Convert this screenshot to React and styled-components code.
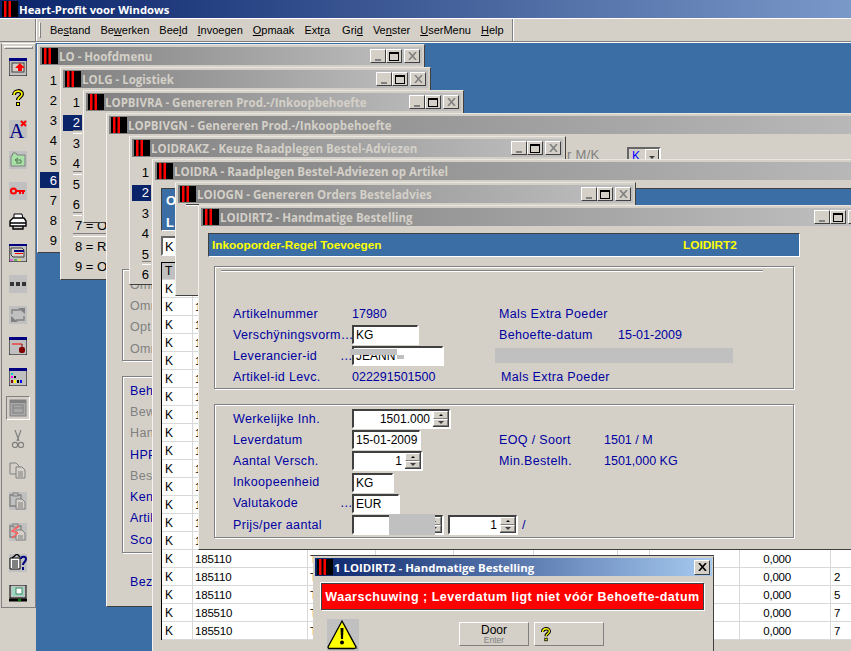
import styled, { createGlobalStyle } from "styled-components";

const GlobalStyle = createGlobalStyle`
  html, body {
    margin: 0;
    padding: 0;
    background: #d4d0c8;
  }
  * {
    box-sizing: border-box;
  }
`;

const MENUS = [
  ["Be", "s", "tand"],
  ["Be", "w", "erken"],
  ["Bee", "l", "d"],
  ["", "I", "nvoegen"],
  ["", "O", "pmaak"],
  ["Ext", "r", "a"],
  ["Gri", "d", ""],
  ["Ve", "n", "ster"],
  ["", "U", "serMenu"],
  ["", "H", "elp"],
];

function QuestionMark() {
  return (
    <svg width="14" height="18" viewBox="0 0 14 18">
      <path d="M3 6 C3 1 11 1 11 5 C11 8 7 8 7 11" fill="none" stroke="#000" strokeWidth="4" />
      <rect x="5" y="13" width="4" height="4" fill="#000" />
      <path d="M3 6 C3 1 11 1 11 5 C11 8 7 8 7 11" fill="none" stroke="#ff0" strokeWidth="1.6" />
      <rect x="6" y="14" width="2" height="2" fill="#ff0" />
    </svg>
  );
}

const G = "#808080";

const TOOL_ICONS = [
  {
    shade: false,
    art: (
      <>
        <rect x="0" y="0" width="18" height="18" fill="#c0c0c0" stroke="#000" />
        <rect x="0" y="0" width="18" height="3" fill="#000080" />
        <rect x="3" y="5" width="12" height="9" fill="#d4d0c8" stroke="#404040" />
        <path d="M11 5 L16 10 H13 V13 H9 V10 H6 Z" fill="#f00" />
      </>
    ),
  },
  { shade: false, help: true },
  {
    shade: true,
    art: (
      <>
        <text x="0" y="18" fontFamily="Liberation Serif" fontSize="21" fill="#000080">A</text>
        <path d="M12 1 L17 6 M17 1 L12 6" stroke="#f00" strokeWidth="2" />
      </>
    ),
  },
  {
    shade: true,
    art: (
      <>
        <path d="M2 5 V15 H16 V4 H8 L7 2 H4 L3 5 Z" fill="#a8e0a8" stroke={G} />
        <path d="M6 9 H12 M9 7 L6 9 L9 11 M12 9 V12 H7" fill="none" stroke="#507850" />
      </>
    ),
  },
  {
    shade: true,
    art: (
      <>
        <circle cx="4.5" cy="9" r="2.6" fill="none" stroke="#f00" strokeWidth="2" />
        <path d="M7 9 H16 M11 9 V12 M14 9 V12" fill="none" stroke="#f00" strokeWidth="2" />
      </>
    ),
  },
  {
    shade: false,
    art: (
      <>
        <path d="M5 1 H13 L14 6 H5 Z" fill="#fff" stroke="#000" />
        <path d="M1 8 L4 5 H15 L17 8 V13 H1 Z" fill="#fff" stroke="#000" strokeWidth="1.4" />
        <path d="M1 10 H17 M4 13 V16 H14 V13" fill="none" stroke="#000" strokeWidth="1.4" />
      </>
    ),
  },
  {
    shade: false,
    art: (
      <>
        <rect x="0" y="0" width="18" height="18" fill="#c0c0c0" stroke="#000" />
        <rect x="0" y="0" width="18" height="2" fill="#000080" />
        <path d="M2 4 H13 L15 6 V13 H4 L2 11 Z" fill="#d4d0c8" stroke="#404040" />
        <rect x="5" y="6" width="10" height="2" fill="#000080" />
        <rect x="6" y="9" width="8" height="1" fill="#f00" />
        <path d="M1 16 H4" stroke="#f0f" />
        <path d="M5 16 H8" stroke="#0a0" />
        <path d="M9 16 H12" stroke="#ff0" />
      </>
    ),
  },
  {
    shade: true,
    art: (
      <>
        <rect x="1" y="7" width="4" height="4" fill="#333" />
        <rect x="7" y="7" width="4" height="4" fill="#333" />
        <rect x="13" y="7" width="4" height="4" fill="#333" />
      </>
    ),
  },
  {
    shade: true,
    art: (
      <>
        <path d="M3 8 V4 H11 M15 10 V14 H7" fill="none" stroke={G} strokeWidth="1.4" />
        <path d="M9 2 H16 V8 Z M9 16 H2 V10 Z" fill={G} />
      </>
    ),
  },
  {
    shade: false,
    art: (
      <>
        <rect x="0" y="0" width="18" height="18" fill="#c0c0c0" stroke="#000" />
        <rect x="0" y="0" width="18" height="3" fill="#000080" />
        <path d="M3 7 H13" stroke="#f00" />
        <path d="M13 7 V10" stroke="#800000" />
        <rect x="10" y="10" width="6" height="6" rx="2" fill="#800000" />
      </>
    ),
  },
  {
    shade: false,
    art: (
      <>
        <rect x="0" y="0" width="18" height="18" fill="#c0c0c0" stroke="#000" />
        <rect x="0" y="0" width="18" height="3" fill="#000080" />
        <rect x="2" y="5" width="2" height="2" fill="#0cc" />
        <rect x="2" y="8" width="2" height="2" fill="#f0f" />
        <rect x="2" y="12" width="2" height="3" fill="#800" />
        <rect x="5" y="8" width="2" height="2" fill="#000" />
        <rect x="5" y="12" width="2" height="3" fill="#ff0" />
        <rect x="8" y="12" width="2" height="3" fill="#000" />
        <rect x="11" y="12" width="2" height="3" fill="#00f" />
      </>
    ),
  },
  {
    selected: true,
    art: (
      <>
        <rect x="1" y="1" width="16" height="16" fill="#a8a8a8" stroke={G} />
        <rect x="1" y="1" width="16" height="3" fill={G} />
        <rect x="4" y="6" width="10" height="8" fill="none" stroke={G} />
        <path d="M4 9 H14" stroke={G} />
      </>
    ),
  },
  {
    shade: false,
    art: (
      <>
        <path d="M6 0 L10 11 M12 0 L8 11" stroke={G} strokeWidth="1.2" />
        <circle cx="6" cy="15" r="2.6" fill="none" stroke={G} strokeWidth="1.2" />
        <circle cx="12" cy="15" r="2.6" fill="none" stroke={G} strokeWidth="1.2" />
      </>
    ),
  },
  {
    shade: false,
    art: (
      <>
        <path d="M1 2 H7 L10 5 V13 H1 Z" fill="#d4d0c8" stroke={G} />
        <path d="M7 6 H13 L16 9 V17 H7 Z" fill="#d4d0c8" stroke={G} />
        <path d="M9 11 H14 M9 13 H14 M9 15 H14" stroke={G} />
      </>
    ),
  },
  {
    shade: true,
    art: (
      <>
        <path d="M1 3 H12 V14 H1 Z" fill="#c0c0c0" stroke={G} strokeWidth="1.3" />
        <rect x="4" y="1" width="5" height="3" fill="#c0c0c0" stroke={G} />
        <path d="M7 7 H13 L16 10 V17 H7 Z" fill="#d4d0c8" stroke={G} />
        <path d="M9 11 H14 M9 13 H14 M9 15 H14" stroke={G} />
      </>
    ),
  },
  {
    shade: true,
    art: (
      <>
        <path d="M1 3 H12 V14 H1 Z" fill="#c0c0c0" stroke={G} strokeWidth="1.3" />
        <rect x="4" y="1" width="5" height="3" fill="#c0c0c0" stroke={G} />
        <path d="M7 7 H13 L16 10 V17 H7 Z" fill="#d4d0c8" stroke={G} />
        <path d="M9 13 H14 M9 15 H14" stroke={G} />
        <path d="M10 3 L3 8 L9 10 M3 15 L9 10" fill="none" stroke="#ff6060" strokeWidth="1.6" />
      </>
    ),
  },
  {
    shade: true,
    art: (
      <>
        <path d="M1 4 H11 V15 H1 Z" fill="#fff" stroke="#000" />
        <path d="M3 7 H9 M3 9 H9 M3 11 H9 M3 13 H9" stroke="#000" />
        <path d="M3 4 L8 0 L11 3" fill="none" stroke="#000" strokeWidth="1.4" />
        <path d="M12 5 C12 2 17 2 17 5 C17 8 14 8 14 11 M14 13 V16" fill="none" stroke="#000080" strokeWidth="2" />
      </>
    ),
  },
  {
    shade: false,
    art: (
      <>
        <rect x="1" y="0" width="16" height="13" fill="#c0c0c0" stroke="#000" />
        <rect x="3" y="2" width="12" height="9" fill="#9fd8c0" />
        <rect x="7" y="3" width="6" height="6" fill="#fff" stroke="#408060" />
        <path d="M0 15 H18" stroke="#000" strokeWidth="3" />
        <path d="M9 15 H12" stroke="#0f0" />
      </>
    ),
  },
];

const COLUMNS = [31, 115, 68, 78, 80, 84, 32, 90, 91, 60];

const FIRST_ROW = ["K", "185110", "TH", "10.007", "14 14 14", "01-01-2009", "", "10.007", "0,000", ""];

const HIDDEN_ROW = ["K", "1"];

const LOWER_ROWS = [
  ["K", "185110", "T", "", "", "", "", "", "0,000", ""],
  ["K", "185110", "T", "", "", "", "", "", "0,000", "2"],
  ["K", "185110", "T", "", "", "", "", "", "0,000", "5"],
  ["K", "185510", "T", "", "", "", "", "", "0,000", "7"],
  ["K", "185510", "T", "", "", "", "", "", "0,000", "7"],
];

function Logo() {
  return (
    <LogoBox>
      <svg width="16" height="16" viewBox="0 0 16 16">
        <rect width="16" height="16" fill="#000" />
        <rect x="2" y="0" width="2.500" height="16" fill="#f00" />
        <rect x="6.500" y="0" width="2.500" height="16" fill="#f00" />
      </svg>
    </LogoBox>
  );
}

function CloseGlyph({ color }) {
  return (
    <svg width="9" height="8" viewBox="0 0 9 8">
      <path d="M1 0 L8 8 M8 0 L1 8" stroke={color} strokeWidth="1.6" />
    </svg>
  );
}

function Window({ left, top, right, bottom, title, children }) {
  return (
    <Frame $left={left} $top={top} $right={right} $bottom={bottom}>
      <TitleBar>
        <Logo />
        <TitleText>{title}</TitleText>
        <WinButtons>
          <WinButton>
            <MinGlyph />
          </WinButton>
          <WinButton>
            <MaxGlyph />
          </WinButton>
          <CloseButton>
            <CloseGlyph color="#808080" />
          </CloseButton>
        </WinButtons>
      </TitleBar>
      {children}
    </Frame>
  );
}

function Spinner({ width, value, arrows = 16 }) {
  return (
    <Field $w={width} $h={19} $right>
      <SpinValue>{value}</SpinValue>
      <SpinBox $w={arrows}>
        <SpinPart>
          <ArrowUp />
        </SpinPart>
        <SpinPart>
          <ArrowDown />
        </SpinPart>
      </SpinBox>
    </Field>
  );
}

function NumberList({ offset, rows, pitch }) {
  return (
    <NumberColumn $offset={offset}>
      {rows.map((r) => (
        <NumberRow key={r.n} $active={r.active} $line={r.line} $pitch={pitch} $wide={r.wide}>
          {r.n}
        </NumberRow>
      ))}
    </NumberColumn>
  );
}

export default function App() {
  return (
    <Screen>
      <GlobalStyle />
      <AppTitle>
        <Logo />
        <AppTitleText>Heart-Profit voor Windows</AppTitleText>
      </AppTitle>
      <MenuBar>
        <MenuStub />
        <MenuBand>
          <MenuHandle />
          {MENUS.map(([a, b, c]) => (
            <MenuItem key={a + b + c} $wide={b === "r"}>
              {a}
              <u>{b}</u>
              {c}
            </MenuItem>
          ))}
        </MenuBand>
      </MenuBar>
      <Body>
        <SideColumn>
          <ToolBar>
            <ToolHandle />
            {TOOL_ICONS.map((t, i) => (
              <ToolSlot key={i}>
                <ToolIcon $shade={t.shade} $selected={t.selected}>
                  {t.help ? (
                    <QuestionMark />
                  ) : (
                    <svg width="18" height="18" viewBox="0 0 18 18">
                      {t.art}
                    </svg>
                  )}
                </ToolIcon>
              </ToolSlot>
            ))}
          </ToolBar>
        </SideColumn>
        <Desktop>
          <Window left={37} top={44} right={425} bottom={253} title="LO - Hoofdmenu">
            <NumberList
              offset={7}
              pitch={20}
              rows={[
                { n: 1 },
                { n: 2 },
                { n: 3 },
                { n: 4 },
                { n: 5 },
                { n: 6, active: true },
                { n: 7 },
                { n: 8 },
                { n: 9 },
              ]}
            />
          </Window>
          <Window left={60} top={67} right={431} bottom={280} title="LOLG - Logistiek">
            <NumberList
              offset={6}
              pitch={20.6}
              rows={[
                { n: 1 },
                { n: 2, active: true, line: true },
                { n: 3 },
                { n: 4, line: true },
                { n: 5 },
                { n: 6, line: true },
                { n: "7 = O", wide: true, line: true },
                { n: "8 = R", wide: true },
                { n: "9 = O", wide: true },
              ]}
            />
          </Window>
          <Window left={83} top={90} right={464} bottom={223} title="LOPBIVRA - Genereren Prod.-/Inkoopbehoefte" />
          <Window left={106} top={113} right={960} bottom={607} title="LOPBIVGN - Genereren Prod.-/Inkoopbehoefte">
            <TopSelect>
              <GrayLabel>r M/K</GrayLabel>
              <Combo>
                <ComboValue>K</ComboValue>
                <ComboButton>
                  <ArrowDown />
                </ComboButton>
              </Combo>
            </TopSelect>
            <SideGroup $h={92} $mt={135} $pad={4}>
              <SideText $gray>Omr</SideText>
              <SideText $gray>Omr</SideText>
              <SideText $gray>Opt</SideText>
              <SideText $gray>Omr</SideText>
            </SideGroup>
            <SideGroup $h={177} $mt={15} $pad={3}>
              <SideText>Beh</SideText>
              <SideText $gray>Bew</SideText>
              <SideText $gray>Han</SideText>
              <SideText>HPP</SideText>
              <SideText $gray>Bes</SideText>
              <SideText>Ken</SideText>
              <SideText>Artik</SideText>
              <SideText>Sco</SideText>
            </SideGroup>
            <BottomText>Bez</BottomText>
          </Window>
          <Window left={129} top={136} right={566} bottom={285} title="LOIDRAKZ - Keuze Raadplegen Bestel-Adviezen">
            <NumberList
              offset={7}
              pitch={20.5}
              rows={[
                { n: 1 },
                { n: 2, active: true },
                { n: 3 },
                { n: 4 },
                { n: 5, line: true },
                { n: 6 },
              ]}
            />
          </Window>
          <Window left={152} top={159} right={960} bottom={700} title="LOIDRA - Raadplegen Bestel-Adviezen op Artikel">
            <OrderHead>
              <OrderLetter>O</OrderLetter>
              <OrderLetter>L</OrderLetter>
            </OrderHead>
            <FilterInput>K</FilterInput>
            <Grid>
              <GridRow $head>
                {COLUMNS.map((w, i) => (
                  <GridCell key={i} $w={w} $head={i === 0} $lead={i === 0}>
                    {i === 0 ? "T" : ""}
                  </GridCell>
                ))}
              </GridRow>
              {Array.from({ length: 14 }).map((_, r) => (
                <GridRow key={r}>
                  {COLUMNS.map((w, i) => (
                    <GridCell key={i} $w={w} $lead={i === 0}>
                      {HIDDEN_ROW[i] || ""}
                    </GridCell>
                  ))}
                </GridRow>
              ))}
              {[FIRST_ROW, ...LOWER_ROWS].map((row, r) => (
                <GridRow key={r}>
                  {COLUMNS.map((w, i) => (
                    <GridCell key={i} $w={w} $lead={i === 0} $amount={i === 8} $last={i === 9}>
                      {row[i]}
                    </GridCell>
                  ))}
                </GridRow>
              ))}
            </Grid>
          </Window>
          <Window left={175} top={182} right={636} bottom={296} title="LOIOGN - Genereren Orders Besteladvies">
            <TinyRule />
          </Window>
          <Window left={198} top={205} right={869} bottom={550} title="LOIDIRT2 - Handmatige Bestelling">
            <FormHead>
              <FormTitle>Inkooporder-Regel Toevoegen</FormTitle>
              <FormCode>LOIDIRT2</FormCode>
            </FormHead>
            <Group $h={123} $mt={9}>
              <GroupRule />
              <FormRow>
                <Label>Artikelnummer</Label>
                <Value>17980</Value>
                <Label>Mals Extra Poeder</Label>
              </FormRow>
              <FormRow>
                <Label>Verschÿningsvorm…</Label>
                <Field $w={66} $h={19}>KG</Field>
                <Label>Behoefte-datum</Label>
                <Value>15-01-2009</Value>
              </FormRow>
              <FormRow>
                <Label>Leverancier-id<Dots>…</Dots></Label>
                <BlurField>
                  <Field $w={91} $h={19}>JEANN</Field>
                  <BlurTop />
                  <BlurBottom />
                </BlurField>
                <GrayBar />
              </FormRow>
              <FormRow>
                <Label>Artikel-id Levc.</Label>
                <Value>022291501500</Value>
                <Label $nudge>Mals Extra Poeder</Label>
              </FormRow>
            </Group>
            <Group $h={134} $mt={15}>
              <Rows2>
                <FormRow $third={105}>
                  <Label>Werkelijke Inh.</Label>
                  <Spinner width={98} value="1501.000" />
                </FormRow>
                <FormRow $third={105}>
                  <Label>Leverdatum</Label>
                  <Field $w={68} $h={19}>15-01-2009</Field>
                  <Label>EOQ / Soort</Label>
                  <Value>1501 / M</Value>
                </FormRow>
                <FormRow $third={105}>
                  <Label>Aantal Versch.</Label>
                  <Spinner width={70} value="1" />
                  <Label>Min.Bestelh.</Label>
                  <Value>1501,000 KG</Value>
                </FormRow>
                <FormRow $third={105}>
                  <Label>Inkoopeenheid</Label>
                  <Field $w={41} $h={19}>KG</Field>
                </FormRow>
                <FormRow $third={105}>
                  <Label>Valutakode<Dots>…</Dots></Label>
                  <Field $w={47} $h={19}>EUR</Field>
                </FormRow>
                <FormRow $third={105}>
                  <Label>Prijs/per aantal</Label>
                  <PriceCell>
                    <BlurField>
                      <Spinner width={91} value="" />
                      <PriceBlur />
                    </BlurField>
                    <Spinner width={69} value="1" />
                    <Value>/</Value>
                  </PriceCell>
                </FormRow>
              </Rows2>
            </Group>
          </Window>
          <Dialog>
            <DialogTitle>
              <Logo />
              <DialogTitleText>1 LOIDIRT2 - Handmatige Bestelling</DialogTitleText>
              <DialogClose>
                <CloseGlyph color="#000" />
              </DialogClose>
            </DialogTitle>
            <WarningBox>Waarschuwing ; Leverdatum ligt niet vóór Behoefte-datum</WarningBox>
            <DialogActions>
              <WarningIcon>
                <svg width="32" height="32" viewBox="0 0 32 32">
                  <rect width="32" height="32" fill="#c0c0c0" />
                  <path d="M17 4 L31 30 H3 Z" fill="#808080" />
                  <path d="M15 2 L29 28 Q29 29.500 27 29.500 H3 Q1 29.500 1 28 Z" fill="#ff0" stroke="#000" strokeWidth="1.300" />
                  <path d="M13.500 9 H16.500 L16 20 H14 Z" fill="#000" />
                  <circle cx="15" cy="23.500" r="2" fill="#000" />
                </svg>
              </WarningIcon>
              <ActionButton>
                <DoorText>Door</DoorText>
                <EnterText>Enter</EnterText>
              </ActionButton>
              <HelpButton>
                <QuestionMark />
              </HelpButton>
            </DialogActions>
          </Dialog>
        </Desktop>
      </Body>
    </Screen>
  );
}

const Screen = styled.div`
  width: 851px;
  height: 651px;
  overflow: hidden;
  display: flex;
  flex-direction: column;
  background: #d4d0c8;
  font-family: "Liberation Sans", Arial, sans-serif;
  font-size: 12px;
  color: #000;
`;

const LogoBox = styled.div`
  display: flex;
  flex: none;
  svg {
    display: block;
  }
`;

const AppTitle = styled.div`
  height: 18px;
  flex: none;
  display: flex;
  align-items: center;
  padding-left: 2px;
  background: linear-gradient(90deg, #0a246a, #7a98c8);
`;

const AppTitleText = styled.span`
  margin-left: 1px;
  color: #fff;
  font-family: "Open Sans", sans-serif;
  font-weight: 700;
  font-size: 11.300px;
`;

const MenuBar = styled.div`
  height: 24px;
  flex: none;
  display: flex;
  border-top: 1px solid #fff;
  border-bottom: 1px solid #808080;
`;

const MenuStub = styled.div`
  width: 36px;
  border-right: 1px solid #808080;
`;

const MenuBand = styled.div`
  width: 477px;
  display: flex;
  align-items: center;
  border-left: 1px solid #fff;
  border-right: 1px solid #808080;
  box-shadow: 1px 0 0 #fff;
  padding-left: 2px;
`;

const MenuHandle = styled.div`
  width: 3px;
  height: 16px;
  margin-right: 9px;
  border: 1px solid;
  border-color: #fff #808080 #808080 #fff;
`;

const MenuItem = styled.span`
  margin-right: ${(p) => (p.$wide ? "12px" : "10px")};
  font-size: 11px;
  white-space: nowrap;
`;

const Body = styled.div`
  flex: 1;
  display: flex;
  min-height: 0;
`;

const SideColumn = styled.div`
  width: 36px;
  flex: none;
`;

const ToolBar = styled.div`
  height: 565px;
  width: 35px;
  margin-top: 1px;
  margin-left: 1px;
  display: flex;
  flex-direction: column;
  padding-top: 2px;
  border: 1px solid;
  border-color: #fff #808080 #808080 #808080;
`;

const ToolHandle = styled.div`
  height: 3px;
  flex: none;
  margin: 0 2px 2px;
  border: 1px solid;
  border-color: #fff #808080 #808080 #fff;
`;

const ToolSlot = styled.div`
  height: 31px;
  flex: none;
  display: flex;
  align-items: center;
  justify-content: center;
  padding-right: 2px;
`;

const ToolIcon = styled.div`
  display: flex;
  align-items: center;
  justify-content: center;
  width: ${(p) => (p.$selected ? "24px" : "18px")};
  height: ${(p) => (p.$selected ? "24px" : "18px")};
  background: ${(p) => (p.$shade ? "#c0c0c0" : "transparent")};
  border: ${(p) => (p.$selected ? "1px solid #fff" : "none")};
  border-top-color: #808080;
  border-left-color: #808080;
`;

const Desktop = styled.div`
  flex: 1;
  position: relative;
  overflow: hidden;
  background: #3a6ea5;
  border-top: 1px solid #fff;
`;

const Frame = styled.div`
  position: absolute;
  left: ${(p) => p.$left - 36}px;
  top: ${(p) => p.$top - 43}px;
  width: ${(p) => p.$right - p.$left}px;
  height: ${(p) => p.$bottom - p.$top}px;
  padding: 3px;
  background: #d4d0c8;
  border: 1px solid;
  border-color: #e8e6e0 #404040 #404040 #f4f3ef;
  overflow: hidden;
`;

const TitleBar = styled.div`
  height: 18px;
  margin: -1px -1px 0;
  padding-left: 2px;
  display: flex;
  align-items: center;
  background: linear-gradient(90deg, #808080, #c0c0c0);
`;

const TitleText = styled.span`
  margin-left: 1px;
  color: #d4d0c8;
  font-family: "Open Sans", sans-serif;
  font-weight: 700;
  font-size: 11.500px;
  white-space: nowrap;
`;

const WinButtons = styled.div`
  margin-left: auto;
  margin-right: 2px;
  display: flex;
  flex: none;
`;

const WinButton = styled.div`
  width: 16px;
  height: 14px;
  position: relative;
  display: flex;
  align-items: center;
  justify-content: center;
  background: #d4d0c8;
  border: 1px solid;
  border-color: #fff #404040 #404040 #fff;
`;

const CloseButton = styled(WinButton)`
  margin-left: 2px;
`;

const MinGlyph = styled.div`
  width: 6px;
  height: 2px;
  background: #808080;
  margin-top: 7px;
  margin-right: 1px;
`;

const MaxGlyph = styled.div`
  width: 10px;
  height: 9px;
  border: 1px solid #000;
  border-top-width: 2px;
`;

const NumberColumn = styled.div`
  width: 60px;
  margin-top: ${(p) => p.$offset}px;
  margin-left: -1px;
`;

const NumberRow = styled.div`
  height: 16px;
  margin-bottom: ${(p) => p.$pitch - 16}px;
  width: ${(p) => (p.$wide ? "60px" : "19px")};
  position: relative;
  display: flex;
  justify-content: ${(p) => (p.$wide ? "flex-start" : "flex-end")};
  align-items: center;
  padding: ${(p) => (p.$wide ? "0 0 0 12px" : "0 2px 0 0")};
  white-space: nowrap;
  color: ${(p) => (p.$active ? "#fff" : "#000")};
  background: ${(p) => (p.$active ? "#0a246a" : "transparent")};
  font-size: 13px;
  &::after {
    content: "";
    display: ${(p) => (p.$line ? "block" : "none")};
    position: absolute;
    left: 10px;
    right: 0;
    bottom: -3px;
    height: 2px;
    border-top: 1px solid #808080;
    border-bottom: 1px solid #fff;
  }
`;

const TopSelect = styled.div`
  display: flex;
  align-items: flex-start;
  height: 0;
  margin-left: 457px;
`;

const GrayLabel = styled.span`
  color: #808080;
  margin-top: 13px;
  width: 60px;
  flex: none;
  letter-spacing: 0.3px;
  font-size: 13px;
`;

const Combo = styled.div`
  display: flex;
  align-items: flex-start;
  width: 34px;
  height: 20px;
  margin-top: 13px;
  border: 2px solid;
  border-color: #666 #fff #fff #666;
`;

const ComboValue = styled.span`
  width: 16px;
  color: #0000ff;
  padding-left: 3px;
  background: #d4d0c8;
`;

const ComboButton = styled.div`
  width: 14px;
  height: 16px;
  display: flex;
  align-items: center;
  justify-content: center;
  background: #d4d0c8;
  border: 1px solid;
  border-color: #fff #404040 #404040 #fff;
`;

const SideGroup = styled.div`
  width: 300px;
  height: ${(p) => p.$h}px;
  margin-top: ${(p) => p.$mt}px;
  margin-left: 12px;
  padding: ${(p) => p.$pad}px 0 0 7px;
  border: 1px solid #808080;
  box-shadow: inset 1px 1px 0 #fff, 1px 1px 0 #fff;
`;

const SideText = styled.div`
  height: 21.300px;
  display: flex;
  align-items: center;
  font-size: 12.500px;
  letter-spacing: 0.35px;
  color: ${(p) => (p.$gray ? "#808080" : "#0000a0")};
`;

const BottomText = styled.div`
  margin: 22px 0 0 20px;
  color: #0000a0;
  font-size: 12.500px;
  letter-spacing: 0.35px;
`;

const OrderHead = styled.div`
  width: 840px;
  height: 43px;
  margin: 8px 0 0 5px;
  padding: 2px 0 0 4px;
  background: #3a6ea5;
  border: 1px solid;
  border-color: #404040 #fff #fff #404040;
`;

const OrderLetter = styled.div`
  height: 22px;
  line-height: 20px;
  color: #fff;
  font-weight: 700;
  font-size: 13px;
`;

const FilterInput = styled.div`
  width: 120px;
  height: 20px;
  margin: 5px 0 0 5px;
  padding: 1px 0 0 2px;
  background: #fff;
  border: 2px solid;
  border-color: #666 #fff #fff #666;
  font-size: 13px;
`;

const Grid = styled.div`
  margin: 6px 0 0 5px;
  width: 840px;
  border-left: 1px solid #000;
  border-top: 1px solid #000;
  background: #fff;
`;

const GridRow = styled.div`
  display: flex;
  height: ${(p) => (p.$head ? "17px" : "18px")};
`;

const GridCell = styled.div`
  flex: none;
  width: ${(p) => p.$w}px;
  height: 100%;
  padding: 0 ${(p) => (p.$amount ? "39px" : "2px")} 0 ${(p) => (p.$last ? "3px" : p.$lead ? "3px" : "2px")};
  display: flex;
  align-items: center;
  justify-content: ${(p) => (p.$amount ? "flex-end" : "flex-start")};
  border-right: 1px solid #d8d8d8;
  border-bottom: 1px solid #d8d8d8;
  background: ${(p) => (p.$head ? "#c0c0c0" : "transparent")};
  font-size: ${(p) => (p.$lead ? "12px" : "11.500px")};
  letter-spacing: ${(p) => (p.$lead ? "0" : "-0.2px")};
  white-space: nowrap;
`;

const TinyRule = styled.div`
  width: 13px;
  height: 2px;
  margin: 1px 0 0 7px;
  border-top: 1px solid #404040;
  border-bottom: 1px solid #fff;
`;

const FormHead = styled.div`
  width: 592px;
  height: 24px;
  margin: 7px 0 0 6px;
  display: flex;
  align-items: center;
  color: #ff0;
  font-weight: 700;
  font-size: 11.800px;
  background: #3a6ea5;
  border: 1px solid;
  border-color: #404040 #fff #fff #404040;
  padding-left: 3px;
`;

const FormTitle = styled.span`
  width: 471px;
  flex: none;
`;

const FormCode = styled.span``;

const Group = styled.div`
  width: 580px;
  height: ${(p) => p.$h}px;
  margin: ${(p) => p.$mt}px 0 0 12px;
  padding-left: 18px;
  border: 1px solid #808080;
  box-shadow: inset 1px 1px 0 #fff, 1px 1px 0 #fff;
`;

const GroupRule = styled.div`
  width: 542px;
  height: 2px;
  margin: 3px 0 31px -12px;
  border-top: 1px solid #808080;
  border-bottom: 1px solid #fff;
`;

const Rows2 = styled.div`
  padding-top: 3px;
`;

const FormRow = styled.div`
  height: 21.200px;
  display: grid;
  grid-template-columns: 119px 147px ${(p) => p.$third || 119}px 1fr;
  align-items: center;
  color: #0000a0;
  font-size: 12.500px;
`;

const Label = styled.span`
  letter-spacing: 0.35px;
  white-space: nowrap;
  position: relative;
  margin-left: ${(p) => (p.$nudge ? "2px" : "0")};
`;

const Dots = styled.span`
  position: absolute;
  left: 107px;
  top: 0;
`;

const Value = styled.span`
  white-space: nowrap;
`;

const Field = styled.div`
  width: ${(p) => p.$w}px;
  height: ${(p) => p.$h}px;
  display: flex;
  align-items: center;
  justify-content: ${(p) => (p.$right ? "flex-end" : "flex-start")};
  padding-left: 2px;
  background: #fff;
  color: #000;
  font-size: 12px;
  white-space: nowrap;
  border: 1px solid;
  border-width: 2px 1px 1px 2px;
  border-color: #404040 #fff #fff #404040;
  box-shadow: 1px 1px 0 #fff;
`;

const SpinValue = styled.span`
  padding-right: 3px;
`;

const SpinBox = styled.div`
  width: ${(p) => p.$w}px;
  height: 16px;
  flex: none;
  display: flex;
  flex-direction: column;
  border-right: 1px solid #404040;
  border-bottom: 1px solid #404040;
`;

const SpinPart = styled.div`
  flex: 1;
  display: flex;
  align-items: center;
  justify-content: center;
  background: #d4d0c8;
  border: 1px solid;
  border-color: #fff #808080 #808080 #fff;
`;

const ArrowUp = styled.div`
  width: 0;
  height: 0;
  border-left: 2px solid transparent;
  border-right: 2px solid transparent;
  border-bottom: 2px solid #000;
`;

const ArrowDown = styled.div`
  width: 0;
  height: 0;
  border-left: 3px solid transparent;
  border-right: 3px solid transparent;
  border-top: 3px solid #404040;
`;

const BlurField = styled.div`
  position: relative;
  width: fit-content;
`;

const BlurTop = styled.div`
  position: absolute;
  left: -2px;
  top: 3px;
  width: 47px;
  height: 6px;
  background: #c0c0c0;
`;

const BlurBottom = styled.div`
  position: absolute;
  left: 45px;
  top: 9px;
  width: 7px;
  height: 4px;
  background: #c0c0c0;
`;

const GrayBar = styled.div`
  grid-column: 3 / 5;
  width: 238px;
  height: 15px;
  margin-left: -4px;
  background: #c0c0c0;
`;

const PriceCell = styled.div`
  grid-column: 2 / 5;
  display: flex;
  align-items: center;
  gap: 5px;
`;

const PriceBlur = styled.div`
  position: absolute;
  left: 37px;
  top: -1px;
  width: 46px;
  height: 21px;
  background: #c0c0c0;
`;

const Dialog = styled.div`
  position: absolute;
  left: ${313 - 36}px;
  top: ${556 - 43}px;
  width: 401px;
  height: 110px;
  padding: 1px;
  background: #d4d0c8;
  border: 1px solid;
  border-color: #d4d0c8 #404040 #404040 #d4d0c8;
  box-shadow: 0 -1px 0 #404040;
`;

const DialogTitle = styled.div`
  height: 18px;
  padding-left: 2px;
  display: flex;
  align-items: center;
  background: linear-gradient(90deg, #0a246a, #a6caf0);
`;

const DialogTitleText = styled.span`
  margin-left: 1px;
  color: #fff;
  font-family: "Open Sans", sans-serif;
  font-weight: 700;
  font-size: 11.400px;
  white-space: nowrap;
`;

const DialogClose = styled.div`
  margin-left: auto;
  margin-right: 2px;
  width: 16px;
  height: 15px;
  display: flex;
  align-items: center;
  justify-content: center;
  background: #d4d0c8;
  border: 1px solid;
  border-color: #fff #404040 #404040 #fff;
`;

const WarningBox = styled.div`
  width: 383px;
  height: 27px;
  margin: 7px 0 0 6px;
  display: flex;
  align-items: center;
  justify-content: center;
  color: #fff;
  background: #f00;
  font-weight: 700;
  font-size: 12.500px;
  letter-spacing: 0.5px;
  white-space: nowrap;
  border: 1px solid #404040;
  box-shadow: 1px 1px 0 #fff, -1px -1px 0 #fff;
`;

const DialogActions = styled.div`
  display: flex;
  align-items: flex-start;
  margin: 9px 0 0 12px;
`;

const WarningIcon = styled.div`
  width: 32px;
  height: 32px;
  margin-right: 100px;
  flex: none;
  svg {
    display: block;
  }
`;

const ActionButton = styled.div`
  width: 70px;
  height: 24px;
  margin-top: 3px;
  margin-right: 5px;
  display: flex;
  flex-direction: column;
  align-items: center;
  justify-content: center;
  border: 1px solid;
  border-color: #fff #808080 #808080 #fff;
`;

const HelpButton = styled(ActionButton)`
  align-items: flex-start;
  padding-left: 5px;
  svg {
    width: 12px;
    height: 15px;
  }
`;

const DoorText = styled.span`
  font-size: 12px;
  line-height: 12px;
`;

const EnterText = styled.span`
  font-size: 8.500px;
  line-height: 9px;
  color: #808080;
`;
